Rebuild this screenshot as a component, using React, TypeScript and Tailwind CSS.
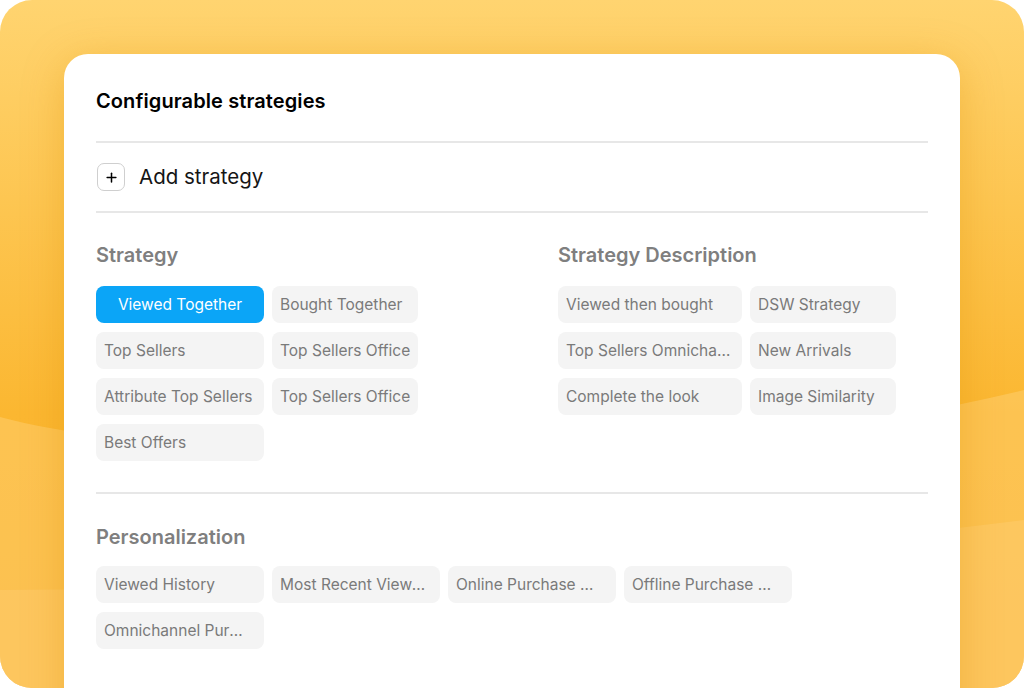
import { Plus } from 'lucide-react';

const strategies = [
  { label: 'Viewed Together', active: true },
  { label: 'Bought Together' },
  { label: 'Top Sellers' },
  { label: 'Top Sellers Office' },
  { label: 'Attribute Top Sellers' },
  { label: 'Top Sellers Office' },
  { label: 'Best Offers' },
];

const descriptions = [
  'Viewed then bought',
  'DSW Strategy',
  'Top Sellers Omnichannel',
  'New Arrivals',
  'Complete the look',
  'Image Similarity',
];

const personalization = [
  'Viewed History',
  'Most Recent Viewed',
  'Online Purchase History',
  'Offline Purchase History',
  'Omnichannel Purchase',
];

const Chip = ({ label, active = false, wide = false }: { label: string; active?: boolean; wide?: boolean }) => (
  <div
    className={
      active
        ? 'h-[37px] rounded-[8px] bg-[#0ba5f7] px-2 text-center text-[15.5px] leading-[37px] text-white truncate'
        : wide
          ? 'h-[37px] rounded-[8px] bg-[#f4f4f4] pl-2 pr-[4px] text-[15.5px] leading-[37px] text-[#7a7a7a] truncate'
          : 'h-[37px] rounded-[8px] bg-[#f4f4f4] pl-2 pr-[14px] text-[15.5px] leading-[37px] text-[#7a7a7a] truncate'
    }
  >
    {label}
  </div>
);

const Divider = () => <div className="h-[2px] bg-[#e7e7e7]" />;

const Background = () => (
  <svg className="absolute inset-0" width="1024" height="688" viewBox="0 0 1024 688">
    <defs>
      <linearGradient id="base" x1="0" y1="0" x2="0" y2="1">
        <stop offset="0" stopColor="#ffd470" />
        <stop offset="0.6" stopColor="#fbb731" />
        <stop offset="1" stopColor="#f9b12c" />
      </linearGradient>
    </defs>
    <rect width="1024" height="688" fill="url(#base)" />
    <path d="M0 417 C 200 470, 700 470, 1024 390 L1024 688 L0 688 Z" fill="#ffd27a" opacity="0.45" />
    <path d="M0 590 C 300 590, 700 560, 1024 520 L1024 688 L0 688 Z" fill="#ffd27a" opacity="0.35" />
  </svg>
);

export default function App() {
  return (
    <div
      className="relative h-[688px] w-[1024px] overflow-hidden rounded-[32px] px-[64px] pt-[54px]"
      style={{ fontFamily: 'Inter, "Noto Sans", sans-serif' }}
    >
      <Background />
      <div className="relative z-10 h-[680px] rounded-[24px] bg-white px-[32px] shadow-[0_8px_40px_rgba(220,140,0,0.35)]">
        <div className="h-[87px] pt-[35px]">
          <h1 className="text-[20px] font-semibold leading-[24px] tracking-[0.1px] text-black">
            Configurable strategies
          </h1>
        </div>
        <Divider />
        <div className="flex h-[68px] items-center gap-[14px]">
          <div className="ml-[1px] flex h-[28px] w-[28px] items-center justify-center rounded-[7px] border-[1.5px] border-[#cfcfcf]">
            <Plus className="h-[15px] w-[15px] text-black" strokeWidth={2.4} />
          </div>
          <span className="text-[20.5px] leading-[28px] text-[#151515]">Add strategy</span>
        </div>
        <Divider />

        <div className="flex pt-[28px]">
          <div className="w-[462px]">
            <h2 className="text-[20px] font-semibold leading-[28px] text-[#7f7f7f]">Strategy</h2>
            <div className="mt-[17px] grid grid-cols-[168px_146px] gap-x-[8px] gap-y-[9px]">
              {strategies.map((s, i) => (
                <Chip key={i} label={s.label} active={s.active} wide />
              ))}
            </div>
          </div>
          <div>
            <h2 className="text-[20px] font-semibold leading-[28px] text-[#7f7f7f]">Strategy Description</h2>
            <div className="mt-[17px] grid grid-cols-[184px_146px] gap-x-[8px] gap-y-[9px]">
              {descriptions.map((d, i) => (
                <Chip key={i} label={d} wide />
              ))}
            </div>
          </div>
        </div>

        <div className="mt-[31px]">
          <Divider />
        </div>

        <div className="pt-[29px]">
          <h2 className="text-[20px] font-semibold leading-[28px] text-[#7f7f7f]">Personalization</h2>
          <div className="mt-[15px] grid grid-cols-[repeat(4,168px)] gap-x-[8px] gap-y-[9px]">
            {personalization.map((p, i) => (
              <Chip key={i} label={p} />
            ))}
          </div>
        </div>
      </div>
    </div>
  );
}
